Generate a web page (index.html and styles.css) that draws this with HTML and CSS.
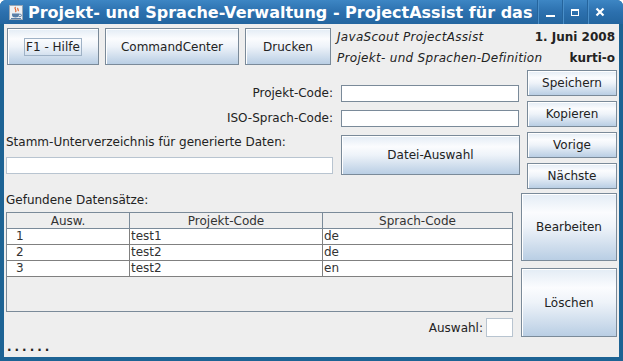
FILE: index.html
```html
<!DOCTYPE html>
<html lang="de">

<head>
    <meta charset="UTF-8">
    <title>Projekt- und Sprache-Verwaltung</title>
    <link rel="stylesheet" href="styles.css">
</head>

<body>
    <div class="window">
        <div class="titlebar">
            <svg class="app-icon" width="14" height="15" viewBox="0 0 14 15">
                <rect x="0.5" y="0.5" width="13" height="14" fill="#eef1f4" stroke="#9aa8b5" />
                <path d="M6.5 2c-2 2 2 3 0 5M9 3c-1 1 1 2 0 3" stroke="#e0622a" fill="none" stroke-width="1.2" />
                <path d="M3 8.5h7v1.5c0 1.8-1.8 2.5-3.5 2.5S3 11.8 3 10z" fill="#5a7fa8" />
                <path d="M10 9.2h1.2a1.2 1.2 0 0 1 0 2.4H9.8" stroke="#5a7fa8" fill="none" />
                <path d="M2 13.5h10" stroke="#5a7fa8" />
            </svg>
            <span class="title">Projekt- und Sprache-Verwaltung - ProjectAssist für das</span>
            <div class="win-controls">
                <span class="wc"><span class="wc-min"></span></span>
                <span class="wc"><span class="wc-max"></span></span>
                <span class="wc">
                    <svg width="10" height="10" viewBox="0 0 10 10">
                        <path d="M1.5 1.5l7 7M8.5 1.5l-7 7" stroke="#fff" stroke-width="2.2" />
                    </svg>
                </span>
            </div>
        </div>

        <div class="content">
            <!-- top row: command buttons and info -->
            <div class="toolbar">
                <button class="btn btn-help"><span class="focus">F1 - Hilfe</span></button>
                <button class="btn btn-cc">CommandCenter</button>
                <button class="btn btn-print">Drucken</button>
                <div class="info">
                    <div class="info-line"><i>JavaScout ProjectAssist</i><b>1. Juni 2008</b></div>
                    <div class="info-line"><i>Projekt- und Sprachen-Definition</i><b>kurti-o</b></div>
                </div>
            </div>

            <div class="main">
                <div class="form">
                    <div class="fields">
                        <label class="field-label">Projekt-Code:</label>
                        <input class="text-field" type="text">
                        <label class="field-label">ISO-Sprach-Code:</label>
                        <input class="text-field" type="text">
                        <div class="stamm">
                            <label class="stamm-label">Stamm-Unterverzeichnis für generierte Daten:</label>
                            <input class="text-field text-field-ro" type="text">
                        </div>
                        <button class="btn btn-file">Datei-Auswahl</button>
                    </div>

                    <div class="found-label">Gefundene Datensätze:</div>
                    <div class="table-pane">
                        <table class="records">
                            <thead>
                                <tr>
                                    <th class="col-sel">Ausw.</th>
                                    <th class="col-proj">Projekt-Code</th>
                                    <th>Sprach-Code</th>
                                </tr>
                            </thead>
                            <tbody>
                                <tr><td class="num">1</td><td>test1</td><td>de</td></tr>
                                <tr><td class="num">2</td><td>test2</td><td>de</td></tr>
                                <tr><td class="num">3</td><td>test2</td><td>en</td></tr>
                            </tbody>
                        </table>
                    </div>

                    <div class="select-row">
                        <label>Auswahl:</label>
                        <input class="text-field select-field" type="text">
                    </div>
                </div>

                <div class="side">
                    <button class="btn btn-small">Speichern</button>
                    <button class="btn btn-small">Kopieren</button>
                    <button class="btn btn-small">Vorige</button>
                    <button class="btn btn-small">Nächste</button>
                    <button class="btn btn-big btn-edit">Bearbeiten</button>
                    <button class="btn btn-big btn-delete">Löschen</button>
                </div>
            </div>

            <div class="status">......</div>
        </div>
    </div>
</body>

</html>
```

FILE: styles.css
```css
body {
    margin: 0;
    background-color: #ffffff;
    font-family: "DejaVu Sans", sans-serif;
    font-size: 12px;
    color: #222;
}

.window {
    width: 623px;
    height: 361px;
    display: flex;
    flex-direction: column;
    background-color: #1d6394;
    border-radius: 6px 6px 0 0;
    overflow: hidden;
}

/* title bar */
.titlebar {
    height: 24px;
    flex: none;
    display: flex;
    align-items: center;
    background: linear-gradient(#3d86c4, #2c70ae 50%, #23659f);
    color: #fff;
}

.app-icon {
    margin-left: 9px;
    margin-right: 5px;
    flex: none;
}

.title {
    flex: 1;
    min-width: 0;
    overflow: hidden;
    white-space: nowrap;
    font-weight: bold;
    font-size: 16px;
}

.win-controls {
    display: flex;
    height: 24px;
    margin-right: 11px;
}

.wc {
    width: 24px;
    display: flex;
    align-items: center;
    justify-content: center;
    border-left: 1px solid #25649c;
    box-shadow: inset 1px 0 0 #4a8fc9;
}

.wc-min {
    width: 9px;
    height: 2px;
    margin-top: 7px;
    background-color: #fff;
}

.wc-max {
    width: 6px;
    height: 4px;
    border: 1px solid #fff;
    border-top-width: 2px;
}

/* content */
.content {
    flex: 1;
    margin: 0 4px 4px;
    padding: 4px 2px 0;
    background-color: #eeeeee;
    display: flex;
    flex-direction: column;
}

.btn {
    font: inherit;
    color: #222;
    padding: 0;
    background: linear-gradient(#e3ecf5 0%, #fbfcfe 28%, #eef3f9 50%, #b9cee4 100%);
    border: 1px solid #7a8a99;
    box-shadow: inset 1px 1px 0 #ffffff;
}

.toolbar {
    height: 37px;
    display: flex;
}

.btn-help {
    margin-left: 1px;
    width: 92px;
}

.focus {
    padding: 1px 1px;
    border: 1px solid #9fb2c6;
}

.btn-cc {
    margin-left: 6px;
    width: 134px;
}

.btn-print {
    margin-left: 6px;
    width: 86px;
}

.info {
    flex: 1;
    margin-left: 6px;
    margin-top: -1px;
    padding-right: 2px;
    line-height: 21px;
}

.info-line {
    display: flex;
    justify-content: space-between;
}

.info-line i {
    letter-spacing: 0.3px;
}

.info-line b {
    font-weight: bold;
}

.main {
    margin-top: 5px;
    display: flex;
}

.form {
    width: 515px;
    padding-top: 15px;
}

.fields {
    display: grid;
    grid-template-columns: 327px 179px;
    grid-template-rows: 17px 17px 40px;
    column-gap: 8px;
    row-gap: 8px;
}

.field-label {
    text-align: right;
    line-height: 17px;
}

.text-field {
    box-sizing: border-box;
    width: 178px;
    height: 17px;
    margin: 0;
    border: 1px solid #7a8a99;
    background-color: #fff;
    font: inherit;
}

.stamm {
    display: flex;
    flex-direction: column;
}

.stamm-label {
    line-height: 15px;
}

.text-field-ro {
    width: 327px;
    margin-top: 7px;
    border-color: #b8c4d0;
}

.btn-file {
    height: 40px;
}

.found-label {
    margin-top: 18px;
    line-height: 14px;
}

.table-pane {
    margin-top: 5px;
    width: 507px;
    height: 100px;
    box-sizing: border-box;
    border: 1px solid #7a8a99;
    background-color: #eeeeee;
}

.records {
    width: 100%;
    border-collapse: collapse;
    table-layout: fixed;
}

.records th {
    height: 15px;
    padding: 0;
    font-weight: normal;
    color: #333;
    background-color: #eeeeee;
    border-right: 1px solid #7a8a99;
    border-bottom: 1px solid #7a8a99;
    line-height: 14px;
}

.records th:last-child {
    border-right: none;
}

.col-sel {
    width: 122px;
}

.col-proj {
    width: 192px;
}

.records td {
    height: 15px;
    padding: 0 0 0 1px;
    background-color: #fff;
    color: #333;
    border: 1px solid #808080;
    border-top: none;
    line-height: 15px;
}

.records td:first-child {
    border-left: none;
}

.records td:last-child {
    border-right: none;
}

.records td.num {
    padding-left: 9px;
}

.select-row {
    margin-top: 6px;
    height: 19px;
    display: flex;
    justify-content: flex-end;
    align-items: center;
    padding-right: 8px;
}

.select-row label {
    margin-right: 3px;
}

.select-field {
    width: 27px;
    height: 19px;
    border-color: #b8c4d0;
}

.side {
    width: 96px;
    display: flex;
    flex-direction: column;
    align-items: flex-end;
}

.btn-small {
    width: 90px;
    height: 26px;
    margin-bottom: 5px;
}

.btn-big {
    width: 96px;
}

.btn-edit {
    margin-top: -1px;
    height: 68px;
}

.btn-delete {
    margin-top: 7px;
    height: 69px;
}

.status {
    height: 20px;
    line-height: 20px;
    padding-left: 1px;
    font-weight: bold;
    color: #222;
    letter-spacing: 3px;
}
```
